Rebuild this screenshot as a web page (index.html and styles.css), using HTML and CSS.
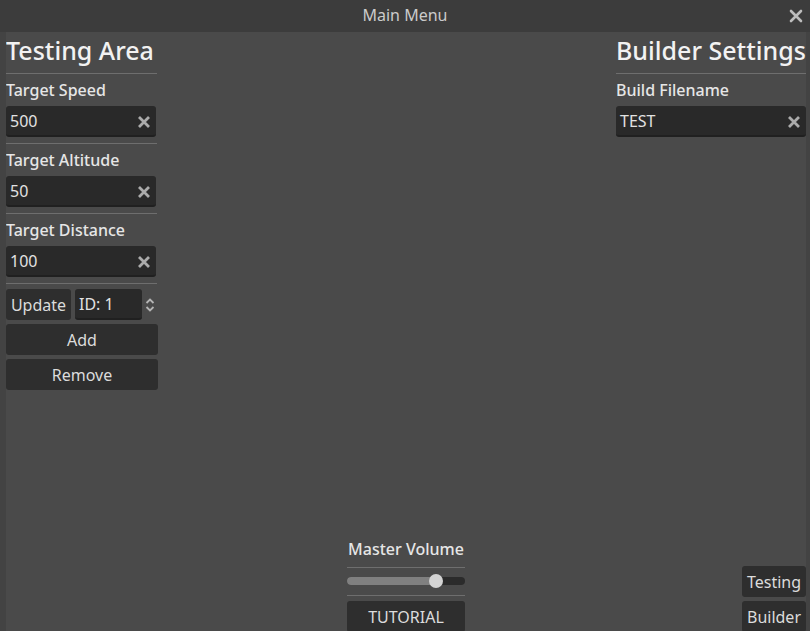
FILE: index.html
```html
<!DOCTYPE html>
<html lang="en">
<head>
    <meta charset="UTF-8">
    <title>Main Menu</title>
    <link rel="stylesheet" href="styles.css">
</head>
<body>
    <div class="window">
        <div class="titlebar">
            <span class="title">Main Menu</span>
            <span class="close-btn">
                <svg width="14" height="14" viewBox="0 0 14 14"><path d="M2 2 L12 12 M12 2 L2 12" stroke="#bdbdbd" stroke-width="2.6" stroke-linecap="round"/></svg>
            </span>
        </div>

        <div class="content">
            <!-- left: testing area -->
            <div class="panel panel-left">
                <div class="heading">Testing Area</div>
                <div class="separator"></div>
                <div class="label">Target Speed</div>
                <div class="line-edit">
                    <span class="value">500</span>
                    <svg class="clear" width="14" height="14" viewBox="0 0 14 14"><path d="M2 2 L12 12 M12 2 L2 12" stroke="#ababab" stroke-width="2.8"/></svg>
                </div>
                <div class="separator"></div>
                <div class="label">Target Altitude</div>
                <div class="line-edit">
                    <span class="value">50</span>
                    <svg class="clear" width="14" height="14" viewBox="0 0 14 14"><path d="M2 2 L12 12 M12 2 L2 12" stroke="#ababab" stroke-width="2.8"/></svg>
                </div>
                <div class="separator"></div>
                <div class="label">Target Distance</div>
                <div class="line-edit">
                    <span class="value">100</span>
                    <svg class="clear" width="14" height="14" viewBox="0 0 14 14"><path d="M2 2 L12 12 M12 2 L2 12" stroke="#ababab" stroke-width="2.8"/></svg>
                </div>
                <div class="separator"></div>
                <div class="row">
                    <button class="btn btn-update">Update</button>
                    <div class="spin-box">
                        <div class="line-edit spin-edit"><span class="value">ID: 1</span></div>
                        <svg class="spin-arrows" width="12" height="16" viewBox="0 0 12 16"><path d="M2.5 6 L6 2.5 L9.5 6 M2.5 10 L6 13.5 L9.5 10" fill="none" stroke="#b5b5b5" stroke-width="1.8"/></svg>
                    </div>
                </div>
                <button class="btn btn-full">Add</button>
                <button class="btn btn-full">Remove</button>
            </div>

            <!-- center: volume -->
            <div class="panel panel-center">
                <div class="label center">Master Volume</div>
                <div class="separator"></div>
                <div class="slider">
                    <div class="slider-track">
                        <div class="slider-fill" style="width: 75%"></div>
                    </div>
                    <div class="grabber" style="left: 75%"></div>
                </div>
                <div class="separator"></div>
                <button class="btn btn-full">TUTORIAL</button>
            </div>

            <!-- right: builder settings -->
            <div class="panel panel-right">
                <div class="builder">
                    <div class="heading">Builder Settings</div>
                    <div class="separator"></div>
                    <div class="label">Build Filename</div>
                    <div class="line-edit full">
                        <span class="value">TEST</span>
                        <svg class="clear" width="14" height="14" viewBox="0 0 14 14"><path d="M2 2 L12 12 M12 2 L2 12" stroke="#ababab" stroke-width="2.8"/></svg>
                    </div>
                </div>
                <div class="tabs">
                    <button class="btn btn-tab">Testing</button>
                    <button class="btn btn-tab">Builder</button>
                </div>
            </div>
        </div>
    </div>
</body>
</html>
```

FILE: styles.css
```css
body {
    margin: 0;
    background-color: #434343;
    font-family: "Noto Sans", "Open Sans", sans-serif;
    overflow: hidden;
}

.window {
    width: 810px;
    height: 631px;
    display: flex;
    flex-direction: column;
    background-color: #434343;
}

.titlebar {
    height: 32px;
    flex: none;
    background-color: #3c3c3c;
    position: relative;
    display: flex;
    align-items: center;
    justify-content: center;
}

.title {
    color: #cbcbcb;
    font-size: 16px;
    line-height: 30px;
    margin-bottom: 2px;
}

.close-btn {
    position: absolute;
    right: 7px;
    top: 9px;
    line-height: 0;
}

.content {
    flex: 1;
    margin: 0 4px 0 6px;
    background-color: #4a4a4a;
    display: grid;
    grid-template-columns: 1fr auto 1fr;
    overflow: hidden;
}

.panel {
    display: flex;
    flex-direction: column;
    gap: 4px;
}

.panel-left {
    width: 152px;
    justify-self: start;
    align-self: start;
}

.panel-center {
    width: 118px;
    align-self: end;
    margin-bottom: -1px;
}

.panel-right {
    width: 190px;
    justify-self: end;
    justify-content: space-between;
    margin-bottom: -1px;
}

.builder {
    display: flex;
    flex-direction: column;
    gap: 4px;
}

.heading {
    color: #f2f2f2;
    font-size: 25px;
    font-weight: 500;
    height: 35px;
    line-height: 36px;
    white-space: nowrap;
}

.separator {
    height: 4px;
    flex: none;
    position: relative;
}

.separator::after {
    content: "";
    position: absolute;
    left: 0;
    right: 0;
    top: 2px;
    height: 1px;
    background-color: #6e6e6e;
}

.panel-left .separator {
    margin-right: 1px;
}

.label {
    color: #e6e6e6;
    font-size: 16px;
    font-weight: 500;
    height: 23px;
    line-height: 23px;
    white-space: nowrap;
}

.label.center {
    text-align: center;
}

.line-edit {
    height: 31px;
    width: 150px;
    box-sizing: border-box;
    background-color: #292929;
    border-bottom: 2px solid #202020;
    border-radius: 3px;
    display: flex;
    align-items: center;
    justify-content: space-between;
    padding: 2px 5px 0 4px;
    color: #e2e2e2;
    font-size: 16px;
}

.line-edit.full {
    width: 100%;
}

.value {
    line-height: 27px;
}

.clear {
    flex: none;
}

.row {
    display: flex;
    gap: 4px;
    align-items: center;
}

.btn {
    font-family: inherit;
    font-size: 16px;
    color: #dcdcdc;
    background-color: #2e2e2e;
    border: none;
    border-radius: 3px;
    height: 31px;
    padding: 0 4px;
    cursor: pointer;
}

.btn-update {
    width: 65px;
    flex: none;
}

.spin-box {
    flex: 1;
    display: flex;
    align-items: center;
    gap: 2px;
}

.spin-edit {
    width: 67px;
    flex: none;
}

.spin-arrows {
    flex: none;
}

.btn-full {
    width: 100%;
}

.slider {
    position: relative;
    height: 16px;
    display: flex;
    align-items: center;
}

.slider-track {
    width: 100%;
    height: 8px;
    border-radius: 4px;
    background-color: #2b2b2b;
    overflow: hidden;
}

.slider-fill {
    height: 100%;
    background-color: #808080;
}

.grabber {
    position: absolute;
    top: 1px;
    width: 14px;
    height: 14px;
    margin-left: -7px;
    border-radius: 50%;
    background-color: #d4d4d4;
}

.tabs {
    display: flex;
    flex-direction: column;
    align-items: flex-end;
    gap: 4px;
}

.btn-tab {
    width: 64px;
}
```
